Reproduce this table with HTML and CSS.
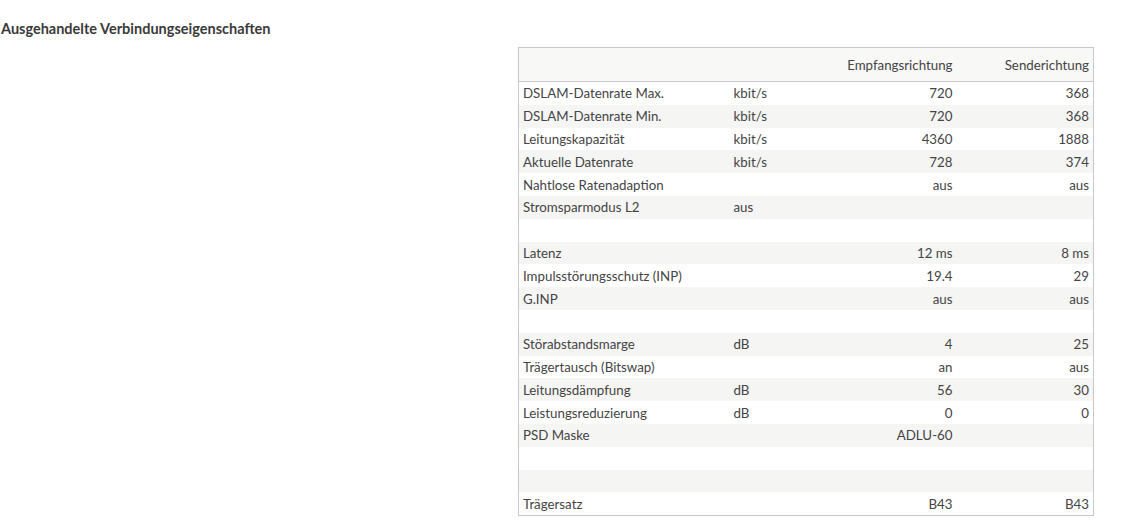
FILE: index.html
```html
<!DOCTYPE html>
<html lang="de">
<head>
<meta charset="utf-8">
<link rel="stylesheet" href="styles.css">
</head>
<body>
<h4 class="title">Ausgehandelte Verbindungseigenschaften</h4>
<div class="wrap">
<table class="props">
<colgroup><col class="c1"><col class="c2"><col class="c3"><col class="c4"></colgroup>
<thead>
<tr><th></th><th></th><th class="r">Empfangsrichtung</th><th class="r">Senderichtung</th></tr>
</thead>
<tbody>
<tr><td>DSLAM-Datenrate Max.</td><td>kbit/s</td><td class="r">720</td><td class="r">368</td></tr>
<tr><td>DSLAM-Datenrate Min.</td><td>kbit/s</td><td class="r">720</td><td class="r">368</td></tr>
<tr><td>Leitungskapazität</td><td>kbit/s</td><td class="r">4360</td><td class="r">1888</td></tr>
<tr><td>Aktuelle Datenrate</td><td>kbit/s</td><td class="r">728</td><td class="r">374</td></tr>
<tr><td>Nahtlose Ratenadaption</td><td></td><td class="r">aus</td><td class="r">aus</td></tr>
<tr><td>Stromsparmodus L2</td><td>aus</td><td class="r"></td><td class="r"></td></tr>
<tr><td></td><td></td><td></td><td></td></tr>
<tr><td>Latenz</td><td></td><td class="r">12 ms</td><td class="r">8 ms</td></tr>
<tr><td>Impulsstörungsschutz (INP)</td><td></td><td class="r">19.4</td><td class="r">29</td></tr>
<tr><td>G.INP</td><td></td><td class="r">aus</td><td class="r">aus</td></tr>
<tr><td></td><td></td><td></td><td></td></tr>
<tr><td>Störabstandsmarge</td><td>dB</td><td class="r">4</td><td class="r">25</td></tr>
<tr><td>Trägertausch (Bitswap)</td><td></td><td class="r">an</td><td class="r">aus</td></tr>
<tr><td>Leitungsdämpfung</td><td>dB</td><td class="r">56</td><td class="r">30</td></tr>
<tr><td>Leistungsreduzierung</td><td>dB</td><td class="r">0</td><td class="r">0</td></tr>
<tr><td>PSD Maske</td><td></td><td class="r">ADLU-60</td><td class="r"></td></tr>
<tr><td></td><td></td><td></td><td></td></tr>
<tr><td></td><td></td><td></td><td></td></tr>
<tr><td>Trägersatz</td><td></td><td class="r">B43</td><td class="r">B43</td></tr>
</tbody>
</table>
</div>
</body>
</html>
```
FILE: styles.css
```css
html, body {
  margin: 0;
  padding: 0;
  background: #ffffff;
}
body {
  font-family: Lato, "Liberation Sans", sans-serif;
  color: #444444;
  font-size: 13.3px;
}
.title {
  margin: 0;
  padding: 20px 0 0 1px;
  height: 18px;
  line-height: 18px;
  font-size: 14.5px;
  font-weight: bold;
  color: #3a3a3a;
}
.wrap {
  display: flex;
  padding: 9px 0 0 518px;
}
.props {
  border-collapse: collapse;
  table-layout: fixed;
  width: 575px;
  border: 1px solid #c8c8c8;
}
.c1 { width: 211px; }
.c2 { width: 110px; }
.c3 { width: 119px; }
.c4 { width: 135px; }
.props th {
  font-weight: normal;
  height: 33px;
  padding: 0 4px;
  background: #f8f8f7;
  border-bottom: 1px solid #c8c8c8;
  text-align: left;
}
.props td {
  height: 22.8px;
  padding: 0 4px;
  text-align: left;
  white-space: nowrap;
}
.props th:nth-child(3),
.props td:nth-child(3) {
  padding-right: 6px;
}
.props tbody tr:nth-child(even) td {
  background: #f5f5f4;
}
.props .r {
  text-align: right;
}
```
